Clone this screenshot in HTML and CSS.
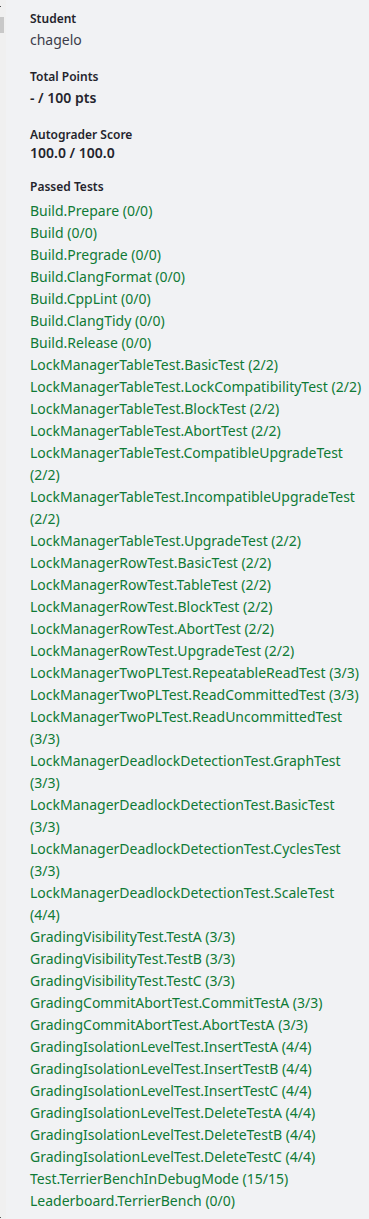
FILE: index.html
```html
<!DOCTYPE html>
<html lang="en">
<head>
    <meta charset="UTF-8">
    <meta name="viewport" content="width=device-width, initial-scale=1.0">
    <title>Submission Results</title>
    <link rel="stylesheet" href="styles.css">
</head>
<body>
    <div class="page">
        <div class="gutter">
            <span class="tick"></span>
            <span class="thumb"></span>
            <span class="tick tick-bottom"></span>
        </div>

        <aside class="sidebar">
            <div class="field">
                <div class="field-label">Student</div>
                <div class="field-value">chagelo</div>
            </div>

            <div class="field">
                <div class="field-label">Total Points</div>
                <div class="field-value strong">- / 100 pts</div>
            </div>

            <div class="field">
                <div class="field-label">Autograder Score</div>
                <div class="field-value strong tight">100.0 / 100.0</div>
            </div>

            <div class="field">
                <div class="field-label">Passed Tests</div>
                <ul class="test-list">
                    <li>Build.Prepare (0/0)</li>
                    <li>Build (0/0)</li>
                    <li>Build.Pregrade (0/0)</li>
                    <li>Build.ClangFormat (0/0)</li>
                    <li>Build.CppLint (0/0)</li>
                    <li>Build.ClangTidy (0/0)</li>
                    <li>Build.Release (0/0)</li>
                    <li>LockManagerTableTest.BasicTest (2/2)</li>
                    <li>LockManagerTableTest.LockCompatibilityTest (2/2)</li>
                    <li>LockManagerTableTest.BlockTest (2/2)</li>
                    <li>LockManagerTableTest.AbortTest (2/2)</li>
                    <li>LockManagerTableTest.CompatibleUpgradeTest (2/2)</li>
                    <li>LockManagerTableTest.IncompatibleUpgradeTest (2/2)</li>
                    <li>LockManagerTableTest.UpgradeTest (2/2)</li>
                    <li>LockManagerRowTest.BasicTest (2/2)</li>
                    <li>LockManagerRowTest.TableTest (2/2)</li>
                    <li>LockManagerRowTest.BlockTest (2/2)</li>
                    <li>LockManagerRowTest.AbortTest (2/2)</li>
                    <li>LockManagerRowTest.UpgradeTest (2/2)</li>
                    <li>LockManagerTwoPLTest.RepeatableReadTest (3/3)</li>
                    <li>LockManagerTwoPLTest.ReadCommittedTest (3/3)</li>
                    <li>LockManagerTwoPLTest.ReadUncommittedTest (3/3)</li>
                    <li>LockManagerDeadlockDetectionTest.GraphTest (3/3)</li>
                    <li>LockManagerDeadlockDetectionTest.BasicTest (3/3)</li>
                    <li>LockManagerDeadlockDetectionTest.CyclesTest (3/3)</li>
                    <li>LockManagerDeadlockDetectionTest.ScaleTest (4/4)</li>
                    <li>GradingVisibilityTest.TestA (3/3)</li>
                    <li>GradingVisibilityTest.TestB (3/3)</li>
                    <li>GradingVisibilityTest.TestC (3/3)</li>
                    <li>GradingCommitAbortTest.CommitTestA (3/3)</li>
                    <li>GradingCommitAbortTest.AbortTestA (3/3)</li>
                    <li>GradingIsolationLevelTest.InsertTestA (4/4)</li>
                    <li>GradingIsolationLevelTest.InsertTestB (4/4)</li>
                    <li>GradingIsolationLevelTest.InsertTestC (4/4)</li>
                    <li>GradingIsolationLevelTest.DeleteTestA (4/4)</li>
                    <li>GradingIsolationLevelTest.DeleteTestB (4/4)</li>
                    <li>GradingIsolationLevelTest.DeleteTestC (4/4)</li>
                    <li>Test.TerrierBenchInDebugMode (15/15)</li>
                    <li>Leaderboard.TerrierBench (0/0)</li>
                </ul>
            </div>
        </aside>
    </div>
</body>
</html>
```

FILE: styles.css
```css
html, body {
    margin: 0;
    padding: 0;
}

body {
    font-family: 'Noto Sans', 'Open Sans', sans-serif;
    background: #f1f2f4;
    color: #2b2b33;
}

.page {
    display: flex;
    min-height: 1219px;
}

.gutter {
    width: 6px;
    flex-shrink: 0;
    background: #f0f0f0;
    display: flex;
    flex-direction: column;
}

.tick {
    display: block;
    width: 1px;
    height: 1px;
    margin-top: 6px;
    background: #555;
}

.thumb {
    display: block;
    width: 4px;
    height: 16px;
    margin-top: 10px;
    background: #c8c8c8;
}

.tick-bottom {
    margin-top: auto;
    margin-bottom: 9px;
}

.sidebar {
    flex: 1;
    padding: 8px 6px 0 24px;
}

.field {
    margin-bottom: 15px;
}

.field-label {
    font-size: 12px;
    font-weight: 600;
    line-height: 20px;
    padding-top: 1px;
    color: #24242c;
}

.field-value {
    font-size: 14px;
    line-height: 22px;
    color: #3d3d4a;
}

.field-value.strong {
    font-weight: 600;
    color: #24242c;
}

.field-value.tight {
    line-height: 16px;
    margin-bottom: 3px;
}

.test-list {
    list-style: none;
    margin: 3px 0 0;
    padding: 0;
}

.test-list li {
    font-size: 14px;
    line-height: 22px;
    color: #0f7a36;
}
```
